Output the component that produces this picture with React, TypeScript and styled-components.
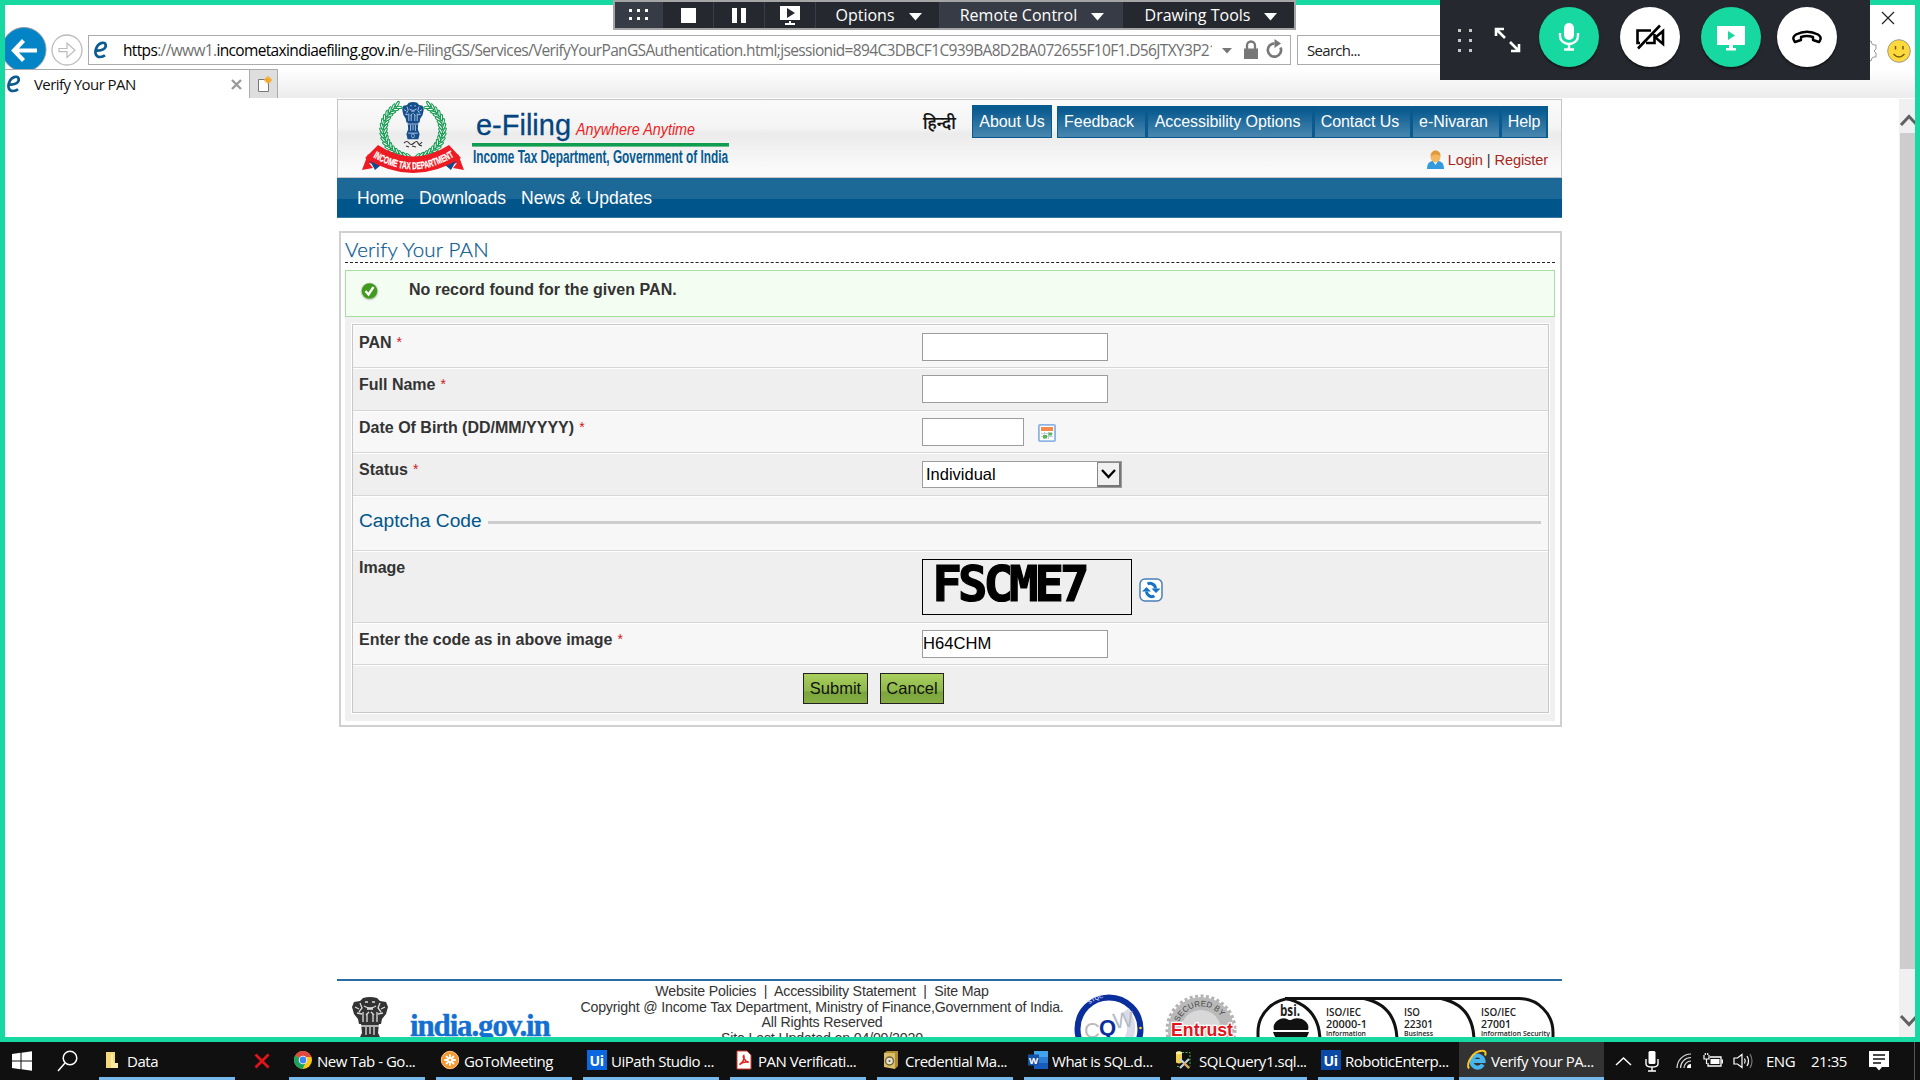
import React from "react";
import styled, { createGlobalStyle } from "styled-components";

const ui = `"Open Sans", "Noto Sans", sans-serif`;
const arial = `"Liberation Sans", Arial, sans-serif`;

const Global = createGlobalStyle`
  *, *::before, *::after { box-sizing: border-box; }
  html, body { margin: 0; padding: 0; background: #fff; }
  body { width: 1920px; height: 1080px; overflow: hidden; font-family: ${arial}; }
  svg { display: block; flex: none; overflow: visible; }
`;

const Desktop = styled.div`
  position: relative;
  width: 1920px;
  height: 1080px;
  overflow: hidden;
  display: flex;
  flex-direction: column;
`;
const SharedFrame = styled.div`
  height: 1042px;
  border: 5px solid #17d8a0;
  background: #fff;
  display: flex;
  flex-direction: column;
  overflow: hidden;
`;

/* ---------- browser chrome ---------- */
const Chrome = styled.div`
  height: 64px;
  flex: none;
  display: flex;
  padding-top: 30px;
  overflow: hidden;
`;
const NavButtons = styled.div`
  width: 83px;
  height: 43px;
  margin-top: -8px;
`;
const AddressBar = styled.div`
  width: 1203px;
  height: 30px;
  border: 1px solid #ababab;
  display: flex;
  align-items: center;
  padding: 0 6px 0 4px;
`;
const Url = styled.div`
  flex: none;
  width: 1089px;
  margin-left: 14px;
  overflow: hidden;
  white-space: nowrap;
  font: 15.5px/26px ${ui};
  letter-spacing: -0.65px;
  color: #6f6f6f;
  b { font-weight: 400; color: #000; }
`;
const AddressIcons = styled.div`
  display: flex;
  align-items: center;
  margin-left: 10px;
`;
const SearchBox = styled.div`
  width: 560px;
  height: 30px;
  margin-left: 6px;
  border: 1px solid #ababab;
  padding-left: 9px;
  font: 15px/28px ${ui};
  letter-spacing: -0.7px;
  color: #222;
`;
const BrowserTools = styled.div`
  margin-left: 4px;
  margin-top: 3px;
  display: flex;
`;
const TabStrip = styled.div`
  height: 29px;
  flex: none;
  display: flex;
  background: linear-gradient(#fff, #ececec);
`;
const Tab = styled.div`
  width: 244px;
  border-top: 1px solid #ababab;
  background: #fff;
  display: flex;
  align-items: center;
  padding-left: 1px;
`;
const TabTitle = styled.span`
  margin-left: 12px;
  width: 197px;
  font: 15px/28px ${ui};
  letter-spacing: -0.57px;
  color: #111;
`;
const NewTab = styled.div`
  width: 29px;
  border: 1px solid #ababab;
  border-bottom: 0;
  background: #dedede;
  display: flex;
  align-items: center;
  justify-content: center;
`;
const Viewport = styled.div`
  height: 939px;
  flex: none;
  margin-top: 1px;
  display: flex;
  overflow: hidden;
`;
const PageArea = styled.div`
  width: 1894px;
  padding-left: 332px;
`;
const Scrollbar = styled.div`
  width: 16px;
  background: #f0f0f0;
  display: flex;
  flex-direction: column;
  overflow: hidden;
`;
const ScrollButton = styled.div<{ $h: number; $top: number }>`
  height: ${(p) => p.$h}px;
  padding: ${(p) => p.$top}px 0 0 1px;
`;
const Thumb = styled.div`
  height: 836px;
  margin-left: 1px;
  background: #cdcdcd;
`;

/* ---------- site ---------- */
const Site = styled.div`
  width: 1225px;
`;
const Header = styled.div`
  height: 79px;
  border: 1px solid #c6c6c6;
  background: linear-gradient(#fafafa 0, #f4f4f4 36%, #ebebeb 44%, #fafafa 90%);
  display: flex;
  justify-content: space-between;
`;
const HeaderRight = styled.div`
  display: flex;
  flex-direction: column;
  align-items: flex-end;
  padding: 5px 13px 0 0;
`;
const TopMenu = styled.div`
  display: flex;
  align-items: flex-end;
`;
const Hindi = styled.div`
  width: 49px;
  height: 33px;
  font: 500 17px/40px "Noto Sans Devanagari", "Noto Sans", "Lohit Devanagari", sans-serif;
  -webkit-text-stroke: 0.2px #111;
  color: #111;
  white-space: nowrap;
`;
const MenuButton = styled.div<{ $w: number; $solo?: boolean }>`
  width: ${(p) => p.$w}px;
  height: ${(p) => (p.$solo ? 33 : 32)}px;
  margin-right: ${(p) => (p.$solo ? 5 : 0)}px;
  padding-right: ${(p) => (p.$solo ? 0 : 5)}px;
  border: 1px solid #095a8f;
  border-right-width: ${(p) => (p.$solo ? 1 : 2)}px;
  background: linear-gradient(#095a8f 10%, #4585ae 95%);
  color: #fff;
  font: 16px/${(p) => (p.$solo ? 31 : 29)}px ${arial};
  letter-spacing: -0.05px;
  text-align: center;
  white-space: nowrap;
  &:last-child { padding-right: 0; }
`;
const LoginLine = styled.div`
  display: flex;
  align-items: center;
  margin-top: 9px;
  font: 14.6px/26px ${arial};
  letter-spacing: -0.1px;
  color: #333;
  white-space: pre;
  a { color: #a8281c; }
  svg { margin-right: 3px; }
`;
const NavBar = styled.div`
  height: 40px;
  background: linear-gradient(#1c6897 0 21px, #00568a 21px 39px, #3478a4 39px);
  display: flex;
  gap: 15px;
  padding-left: 20px;
  font: 17.6px/41px ${arial};
  color: #fff;
`;
const Panel = styled.div`
  margin: 13px 0 0 2px;
  width: 1223px;
  height: 496px;
  border: 2px solid #d0d0d0;
  padding: 6px 5px 4px 4px;
`;
const PanelTitle = styled.h1`
  margin: 0;
  height: 24px;
  border-bottom: 1px dashed #222;
  font: 300 20.5px/20px Lato, sans-serif;
  letter-spacing: 0.2px;
  color: #0b5a90;
  -webkit-text-stroke: 0.25px #0b5a90;
`;
const Notice = styled.div`
  margin-top: 7px;
  height: 47px;
  border: 1px solid #a6dfa2;
  background: #f4fdf1;
  display: flex;
  padding: 10px 0 0 14px;
  font: bold 16px/18px ${arial};
  letter-spacing: 0.04px;
  color: #333;
  span { margin-left: 30px; }
`;
const FormArea = styled.div`
  background: #f0f0f0;
  height: 404px;
  padding: 7px 6px 7px 7px;
`;
const Form = styled.div`
  border: 1px solid #c8c8c8;
  outline: 1px solid #fff;
  height: 389px;
`;
const Row = styled.div<{ $h: number; $alt?: boolean }>`
  height: ${(p) => p.$h}px;
  display: flex;
  background: ${(p) => (p.$alt ? "#efefef" : "#f7f7f7")};
  border-bottom: 1px solid #d6d6d6;
  box-shadow: inset 0 1px #fff;
  &:last-child { border-bottom: 0; }
`;
const Label = styled.label<{ $t?: number }>`
  width: 569px;
  padding: ${(p) => p.$t ?? 8}px 0 0 6px;
  font: bold 16px/20px ${arial};
  color: #333;
`;
const Star = styled.span`
  margin-left: 5px;
  color: #d01818;
  font: 14px/12px ${arial};
  vertical-align: 1px;
`;
const Field = styled.div<{ $t?: number }>`
  display: flex;
  padding-top: ${(p) => p.$t ?? 8}px;
`;
const TextBox = styled.input<{ $w: number }>`
  width: ${(p) => p.$w}px;
  height: 28px;
  margin: 0;
  padding: 0;
  border: 1px solid #9c9c9c;
  border-radius: 0;
  background: #fff;
  font: 16.6px ${arial};
  color: #000;
`;
const IconSlot = styled.div<{ $l: number; $t: number }>`
  margin: ${(p) => p.$t}px 0 0 ${(p) => p.$l}px;
`;
const SelectBox = styled.div`
  width: 200px;
  height: 27px;
  border: 1px solid #9c9c9c;
  background: #fff;
  display: flex;
  justify-content: space-between;
  padding-left: 3px;
  font: 16.5px/25px ${arial};
  color: #000;
`;
const SelectArrow = styled.div`
  width: 24px;
  border: 1px solid #888;
  border-right: 2px solid #777;
  border-bottom: 2px solid #777;
  background: #f0f0f0;
  display: flex;
  align-items: center;
  justify-content: center;
`;
const Legend = styled.div`
  flex: 1;
  display: flex;
  align-items: center;
  padding: 0 7px 4px 6px;
  font: 19.2px/24px ${arial};
  color: #00568a;
  &::after { content: ""; flex: 1; height: 3px; margin: 3px 0 0 6px; background: #cdcdcd; }
`;
const Captcha = styled.div`
  width: 210px;
  height: 56px;
  border: 1px solid #000;
`;
const Actions = styled.div`
  display: flex;
  gap: 12px;
  padding: 8px 0 0 450px;
`;
const Action = styled.button<{ $w: number }>`
  width: ${(p) => p.$w}px;
  height: 31px;
  padding: 0;
  border: 1px solid #222;
  background: linear-gradient(#a9cf5d, #8fb94c 58%, #7ba53c 62%, #86ae45);
  font: 16.5px/27px ${arial};
  color: #111;
`;

/* ---------- footer ---------- */
const Footer = styled.footer`
  margin-top: 252px;
  height: 90px;
  border-top: 2px solid #2a6ca3;
  display: flex;
`;
const IndiaGov = styled.div`
  flex: none;
  width: 179px;
  padding: 28px 0 0 17px;
  font: bold 31px/34px "Liberation Serif", serif;
  letter-spacing: -1.15px;
  -webkit-text-stroke: 0.4px #1470d0;
  color: #1470d0;
`;
const FooterText = styled.div`
  flex: none;
  width: 500px;
  margin-right: 1px;
  padding-top: 3px;
  text-align: center;
  font: 14.2px/15.7px ${arial};
  letter-spacing: -0.18px;
  color: #333;
  white-space: pre;
`;

/* ---------- meeting overlays ---------- */
const MeetingBar = styled.div`
  position: absolute;
  left: 613px;
  top: 0;
  width: 683px;
  height: 30px;
  border: 2px solid #a5a5a5;
  background: #25282e;
  display: flex;
`;
const MeetingItem = styled.div<{ $w: number; $lit?: boolean }>`
  width: ${(p) => p.$w}px;
  padding-left: ${(p) => (p.$w > 60 ? 2 : 0)}px;
  display: flex;
  align-items: center;
  justify-content: center;
  gap: 12px;
  border-right: 1px solid #3a3e48;
  background: ${(p) => (p.$lit ? "#373b45" : "#25282e")};
  color: #fff;
  font: 16px/26px ${ui};
  white-space: nowrap;
  &:last-child { border-right: 0; padding-left: 5px; }
`;
const CallBar = styled.div`
  position: absolute;
  left: 1440px;
  top: 0;
  width: 430px;
  height: 80px;
  background: #25282e;
  display: flex;
  padding: 7px 0 0 18px;
`;
const CloseWindow = styled.div`
  position: absolute;
  left: 1881px;
  top: 11px;
`;
const CallButton = styled.div<{ $on?: boolean; $gap: number }>`
  width: 60px;
  height: 60px;
  margin-left: ${(p) => p.$gap}px;
  border-radius: 50%;
  background: ${(p) => (p.$on ? "#17d8a0" : "#fff")};
  box-shadow: 0 2px 2px rgba(0, 0, 0, 0.45);
  display: flex;
  align-items: center;
  justify-content: center;
`;

/* ---------- taskbar ---------- */
const Taskbar = styled.div`
  height: 38px;
  background: #101010;
  display: flex;
  font: 15px/36px ${ui};
  letter-spacing: -0.47px;
  color: #fff;
`;
const Slot = styled.div<{ $w: number; $l?: number }>`
  width: ${(p) => p.$w}px;
  padding-left: ${(p) => p.$l ?? 0}px;
  flex: none;
  display: flex;
  align-items: center;
  gap: 25px;
`;
const Task = styled.div<{ $active?: boolean; $w?: number; $r?: number; $l?: number }>`
  width: ${(p) => p.$w ?? 136}px;
  margin-right: ${(p) => p.$r ?? 11}px;
  padding-left: ${(p) => p.$l ?? 4}px;
  flex: none;
  display: flex;
  align-items: center;
  gap: 4px;
  white-space: nowrap;
  border-bottom: 3px solid #76b9ed;
  background: ${(p) => (p.$active ? "#333" : "transparent")};
  span { padding-top: 2px; }
`;
const Tray = styled.div`
  display: flex;
  align-items: center;
  padding-left: 11px;
`;
const TrayItem = styled.div<{ $w: number }>`
  width: ${(p) => p.$w}px;
  flex: none;
`;

/* ---------- drawings ---------- */
const EMark = () => (
  <svg width="16" height="20" viewBox="0 0 16 20">
    <path d="M2.500 10.500C9 11.300 13.200 8.500 12.700 5 12.200 1.600 6.600 2 4 6.600 1 12 2.400 17 7 17c2 0 3.800-.7 5-1.800" fill="none" stroke="#0b5a90" strokeWidth="2.700" />
  </svg>
);
const NavArrows = () => (
  <svg width="83" height="43" viewBox="0 0 83 43">
    <circle cx="19" cy="22.500" r="22" fill="#0284c7" stroke="#8a9aa3" strokeWidth="1" />
    <path d="M32 23.500H10M18.500 13.500 9 23.500l9.500 10" fill="none" stroke="#fff" strokeWidth="4.200" />
    <circle cx="62" cy="23" r="15" fill="#fff" stroke="#bbb" strokeWidth="1.300" />
    <path d="M54 21.500h8v-5.500l8 7.200-8 7.200v-5.700h-8z" fill="#fff" stroke="#bbb" strokeWidth="1.200" />
  </svg>
);

const leaves = (side: number) =>
  Array.from({ length: 17 }, (_, i) => {
    const a = ((-62 + i * 8.8) * Math.PI) / 180;
    const x = 50 + side * 29.5 * Math.cos(a);
    const y = 28 + 28 * Math.sin(a);
    const r = (Math.atan2(Math.cos(a), -side * Math.sin(a)) * 180) / Math.PI;
    return (
      <g key={`${side}${i}`} transform={`translate(${x} ${y}) rotate(${r})`}>
        <ellipse cx="0" cy="-2.100" rx="3.200" ry="1.100" transform="rotate(30)" />
        <ellipse cx="0" cy="2.100" rx="3.200" ry="1.100" transform="rotate(-30)" />
      </g>
    );
  });

const Lions = ({ color, light }: { color: string; light: string }) => (
  <g>
    <path d="M13 1q7-2 14 0l3 3 6 1 2 5-2 7-4 5-1 5H9l-1-5-4-5-2-7 2-5 6-1z" fill={color} />
    <path d="M11 26h18l-1 10 3 6-2 7H11l-2-7 3-6z" fill={color} />
    <path d="M15 5h3m4 0h3M14 9q6 4 12 0M17 12h6M5 10l4 2m22 0 4-2M7 16l5 1m16 0 5-1M13 15v10m4-8v8m6-8v8m4-10v10M11 29h18M16 30v8m8-8v8M20 30v7M12 41h16M10 6l2 5-3 4M30 6l-2 5 3 4M19 15l-3 3m5-3 3 3" stroke={light} strokeWidth="1.300" fill="none" />
    <circle cx="20" cy="44.500" r="2.600" fill="none" stroke={light} />
  </g>
);

const SiteLogo = () => (
  <svg width="400" height="76" viewBox="0 0 400 76">
    <g transform="translate(25 2)">
      <g fill="#fff" stroke="#149a50" strokeWidth="1.100">{leaves(1)}{leaves(-1)}</g>
      <g transform="translate(38 0) scale(.6 .76)"><Lions color="#164e8c" light="#b6cde8" /></g>
      <path d="M41 41q3-3 5 0t5 0 4 0 4-1M43 44l3 1m3-1 4 1m3-2 3 1" fill="none" stroke="#333" strokeWidth="1.200" />
      <path d="M5 52-1 68l11-2-4-5 12 3M95 52l6 16-11-2 4-5-12 3" fill="#ed1c24" />
      <path d="m7 59 5 9 6-5zM93 59l-5 9-6-5z" fill="#124a8c" />
      <path d="M15 43Q50 66 86 43L98 56Q50 86 2 56z" fill="#ed1c24" />
      <path id="ribbon" d="M10 55Q50 80 92 54" fill="none" />
      <text fill="#fff" fontFamily="Liberation Sans" fontWeight="bold" fontSize="10" stroke="#fff" strokeWidth=".3">
        <textPath href="#ribbon" textLength="86" lengthAdjust="spacingAndGlyphs">INCOME TAX DEPARTMENT</textPath>
      </text>
    </g>
    <text x="138" y="35" fontFamily="Liberation Sans" fontSize="29" fill="#05457f" stroke="#05457f" strokeWidth=".3" textLength="95" lengthAdjust="spacingAndGlyphs">e-Filing</text>
    <text x="238" y="35" fontFamily="Liberation Sans" fontStyle="italic" fontSize="16.500" fill="#ed1c24" textLength="119" lengthAdjust="spacingAndGlyphs">Anywhere Anytime</text>
    <rect x="134" y="43" width="257" height="3.600" fill="#0f9d4f" />
    <text x="135" y="63" fontFamily="Liberation Sans" fontWeight="bold" fontSize="17.500" fill="#075a90" textLength="255" lengthAdjust="spacingAndGlyphs">Income Tax Department, Government of India</text>
  </svg>
);

const Badges = () => (
  <svg width="480" height="70" viewBox="0 0 480 70">
    <circle cx="36" cy="48" r="31.500" fill="#fff" stroke="#0a2e9c" strokeWidth="6" />
    <path d="M52 30a26 26 0 0 1-26 42" fill="none" stroke="#d9dce8" strokeWidth="8" />
    <circle cx="67.500" cy="47" r="1.300" fill="#ffd400" />
    <path id="stqc" d="M11 29A31 31 0 0 1 48 19" fill="none" />
    <text fill="#cdd6ff" fontFamily="Liberation Sans" fontWeight="bold" fontSize="5.500"><textPath href="#stqc" startOffset="8">STQC</textPath></text>
    <g fontFamily="Liberation Sans" fontSize="22">
      <text x="11" y="57" fill="#bbb">C</text>
      <text x="26" y="54" fill="#0a2e9c" fontWeight="bold">Q</text>
      <text x="41" y="48" fill="#b5bac8" transform="rotate(-8 41 48)">W</text>
    </g>
    <circle cx="128" cy="49" r="33" fill="#b9b9b9" />
    <circle cx="128" cy="49" r="34" fill="none" stroke="#b3b3b3" strokeWidth="3" strokeDasharray="3 2.500" />
    <circle cx="128" cy="49" r="20" fill="#d8d8d8" />
    <path id="secured" d="M106 41A24 24 0 0 1 151 41" fill="none" />
    <text fill="#444" fontFamily="Liberation Sans" fontSize="8"><textPath href="#secured" textLength="52">SECURED BY</textPath></text>
    <text x="98" y="55" fontFamily="Liberation Sans" fontWeight="bold" fontSize="19" fill="#e3141b" stroke="#fff" strokeWidth="2.500" paintOrder="stroke" textLength="62" lengthAdjust="spacingAndGlyphs">Entrust</text>
    <g transform="translate(-2 0)">
      <g fill="#fff" stroke="#111" strokeWidth="3">
        <path d="M223 17.500h225a34 34 0 0 1 34 34v30H187V51a34 34 0 0 1 36-33.500z" />
        <path d="M370 17.500q33 7 33 43M293 17.500q33 7 33 43M215 17.500q34 8 34 43" fill="none" />
      </g>
      <path d="M214 16h226v3H214z" fill="#111" />
      <path d="M218 39q-4-3-9-1-8 4-6 11h34q2-7-6-11-7-2-11 1zM202 51h36q-3 10-18 20-15-10-18-20z" fill="#111" />
      <g fontFamily="Open Sans" fill="#222" fontWeight="600">
        <text x="209" y="35" fontSize="16" fontWeight="700" textLength="20" lengthAdjust="spacingAndGlyphs">bsi.</text>
        <g fontSize="11.500">
          <text x="255" y="35" textLength="35" lengthAdjust="spacingAndGlyphs">ISO/IEC</text>
          <text x="255" y="46.500" textLength="41" lengthAdjust="spacingAndGlyphs">20000-1</text>
          <text x="333" y="35" textLength="16" lengthAdjust="spacingAndGlyphs">ISO</text>
          <text x="333" y="46.500" textLength="29" lengthAdjust="spacingAndGlyphs">22301</text>
          <text x="410" y="35" textLength="35" lengthAdjust="spacingAndGlyphs">ISO/IEC</text>
          <text x="410" y="46.500" textLength="30" lengthAdjust="spacingAndGlyphs">27001</text>
        </g>
        <g fontSize="7.500">
          <text x="255" y="55" textLength="40" lengthAdjust="spacingAndGlyphs">Information</text>
          <text x="333" y="55" textLength="29" lengthAdjust="spacingAndGlyphs">Business</text>
          <text x="410" y="55" textLength="69" lengthAdjust="spacingAndGlyphs">Information Security</text>
        </g>
      </g>
    </g>
  </svg>
);

const CaretMark = styled.svg`
  margin: 4px 0 0 2px;
`;
const Caret = () => <CaretMark width="13" height="8" viewBox="0 0 13 8"><path d="M0 0h13L6.500 7.500z" fill="#fff" /></CaretMark>;
const Req = () => <Star>*</Star>;

const UiIcon = ({ c }: { c: string }) => (
  <svg width="20" height="20" viewBox="0 0 20 20"><rect width="20" height="20" fill={c} /><text x="2.500" y="15.500" fill="#fff" fontFamily="Open Sans" fontWeight="700" fontSize="14.500" textLength="14" lengthAdjust="spacingAndGlyphs">Ui</text></svg>
);
const ChromeIcon = () => (
  <svg width="20" height="20" viewBox="0 0 20 20"><circle cx="10" cy="10" r="9" fill="#f9c915" /><path d="M10 10 2.200 5.500A9 9 0 0 1 17.800 5.500L18 7H10z" fill="#dd4b3e" /><path d="M2.200 5.500A9 9 0 0 0 9.500 19l3.500-7-3-2z" fill="#1aa260" /><circle cx="10" cy="10" r="4.300" fill="#fff" /><circle cx="10" cy="10" r="3.400" fill="#4285f4" /></svg>
);
const GoToIcon = () => (
  <svg width="20" height="20" viewBox="0 0 20 20"><circle cx="10" cy="10" r="8.700" fill="#f59a31" stroke="#ffc680" /><path d="M10 5v3M10 12v3M5 10h3M12 10h3M6.500 6.500l2 2M11.500 11.500l2 2M13.500 6.500l-2 2M8.500 11.500l-2 2" stroke="#fff" strokeWidth="1.800" strokeLinecap="round" /></svg>
);
const PdfIcon = () => (
  <svg width="20" height="20" viewBox="0 0 20 20"><path d="M3 1h10l4 4v14H3z" fill="#fff" stroke="#d9392f" /><path d="M5.500 14.500C9 13 11 8 9.800 5.500c-1.300 1 .5 6 5 6.700-3.500-.6-7 .5-9.300 2.300z" fill="none" stroke="#e0241b" strokeWidth="1.500" /></svg>
);
const SafeIcon = () => (
  <svg width="20" height="20" viewBox="0 0 20 20"><path d="M3 3 6 1l11 0v15l-3 3z" fill="#b08b32" /><path d="M3 3h11v16L3 17z" fill="#dcbf6a" /><circle cx="8.500" cy="11" r="4" fill="#e8e2cc" stroke="#6e6238" strokeWidth="1.400" /><circle cx="8.500" cy="11" r="1" fill="#554" /></svg>
);
const WordIcon = () => (
  <svg width="20" height="20" viewBox="0 0 20 20"><path d="M6 1h14v6H6z" fill="#41a5ee" /><path d="M6 7h14v6H6z" fill="#2b7cd3" /><path d="M6 13h14v6H6z" fill="#185abd" /><rect y="4.500" width="11" height="11" fill="#1552a8" /><text x="1" y="13.500" fontFamily="Open Sans" fontWeight="700" fontSize="9.500" fill="#fff">W</text></svg>
);
const SqlIcon = () => (
  <svg width="20" height="20" viewBox="0 0 20 20"><path d="M7 2.500h8v14M2 16.500h5" fill="none" stroke="#3cc13b" strokeDasharray="2 1.500" /><path d="M1 2.500q3-2 6 0v10q-3 2-6 0z" fill="#f1d04b" /><ellipse cx="4" cy="2.800" rx="3" ry="1.500" fill="#fff2a8" /><path d="m5 9 9 9M14 9l-9 9" stroke="#c3d0dc" strokeWidth="2.200" /><path d="m9 13 5 5" stroke="#e2a64a" strokeWidth="2" /></svg>
);
const IeIcon = () => (
  <svg width="20" height="22" viewBox="0 0 20 22"><path d="M5 12h11.500a6 6 0 1 0-.7 3.500" fill="none" stroke="#47b6ee" strokeWidth="4" /><path d="M2 19.500C-2 15 7 0 17 2c2.500 1 1.500 3.500 1 4.500" fill="none" stroke="#f7c52d" strokeWidth="2" /></svg>
);

const tasks: [string, React.ReactNode][] = [
  ["New Tab - Go...", <ChromeIcon />],
  ["GoToMeeting", <GoToIcon />],
  ["UiPath Studio ...", <UiIcon c="#0a67e0" />],
  ["PAN Verificati...", <PdfIcon />],
  ["Credential Ma...", <SafeIcon />],
  ["What is SQL.d...", <WordIcon />],
  ["SQLQuery1.sql...", <SqlIcon />],
];

export default function App() {
  return (
    <Desktop>
      <Global />
      <SharedFrame>
        <Chrome>
          <NavButtons><NavArrows /></NavButtons>
          <AddressBar>
            <EMark />
            <Url>
              <b>https</b>://www1.<b>incometaxindiaefiling.gov.in</b>/e-FilingGS/Services/VerifyYourPanGSAuthentication.html;jsessionid=894C3DBCF1C939BA8D2BA072655F10F1.D56JTXY3P21
            </Url>
            <AddressIcons>
              <svg width="62" height="22" viewBox="0 0 62 22">
                <path d="M0 9h10l-5 5.500z" fill="#777" />
                <path d="M22 9.500h14V20H22z" fill="#777" /><path d="M25 10V6.500a4 4 0 0 1 8 0V10" fill="none" stroke="#777" strokeWidth="2.300" />
                <path d="M58.500 8.500a6.600 6.600 0 1 1-6-4" fill="none" stroke="#777" strokeWidth="2.700" /><path d="M52.500 0l6.500 4.500-6.500 4.500z" fill="#777" />
              </svg>
            </AddressIcons>
          </AddressBar>
          <SearchBox>Search...</SearchBox>
          <BrowserTools>
            <svg width="52" height="26" viewBox="0 0 52 26">
              <path d="M8 4l2-1 1 3 2 1 2 0v4l-2 2 2 2v4l-2 0-2 1-1 3-2-1" fill="none" stroke="#999" />
              <circle cx="38" cy="13" r="11.300" fill="#ffd93b" stroke="#9b9b8e" />
              <path d="M34.500 8v3.500M42 8v3.500" stroke="#6d5b12" strokeWidth="1.500" /><path d="M32.500 16q5.500 6 11 0" fill="none" stroke="#6d5b12" strokeWidth="1.300" />
            </svg>
          </BrowserTools>
        </Chrome>
        <TabStrip>
          <Tab>
            <EMark />
            <TabTitle>Verify Your PAN</TabTitle>
            <svg width="11" height="11" viewBox="0 0 11 11"><path d="m1 1 9 9M10 1l-9 9" stroke="#9a9a9a" strokeWidth="2.300" /></svg>
          </Tab>
          <NewTab>
            <svg width="16" height="17" viewBox="0 0 16 17"><path d="M2.500 3.500h10v12h-10z" fill="#fff" stroke="#777" /><path d="M12 0v8M8 4h8M9.500 1.500l5 5M14.500 1.500l-5 5" stroke="#f7a823" strokeWidth="1.300" /></svg>
          </NewTab>
        </TabStrip>
        <Viewport>
          <PageArea>
            <Site>
              <Header>
                <SiteLogo />
                <HeaderRight>
                  <TopMenu>
                    <Hindi>हिन्दी</Hindi>
                    <MenuButton $w={80} $solo>About Us</MenuButton>
                    <MenuButton $w={90}>Feedback</MenuButton>
                    <MenuButton $w={167}>Accessibility Options</MenuButton>
                    <MenuButton $w={98}>Contact Us</MenuButton>
                    <MenuButton $w={89}>e-Nivaran</MenuButton>
                    <MenuButton $w={47}>Help</MenuButton>
                  </TopMenu>
                  <LoginLine>
                    <svg width="19" height="20" viewBox="0 0 19 20"><path d="M1 19q0-7 5-8h7q5 1 5 8z" fill="#329be0" /><path d="m7 11 2.500 4 2.500-4z" fill="#fff" /><ellipse cx="9.500" cy="6.500" rx="5" ry="6" fill="#f3b861" /><path d="M4.500 6q1-6 6-5.500 4 1 4 5.500-4-3-10 0z" fill="#e09a3e" /></svg>
                    <a>Login</a> | <a>Register</a>
                  </LoginLine>
                </HeaderRight>
              </Header>
              <NavBar><span>Home</span><span>Downloads</span><span>News &amp; Updates</span></NavBar>
              <Panel>
                <PanelTitle>Verify Your PAN</PanelTitle>
                <Notice>
                  <svg width="19" height="20" viewBox="0 0 19 20"><circle cx="9.500" cy="10.500" r="9" fill="#d0d6cc" /><circle cx="9.500" cy="10" r="7.800" fill="#3f9a1e" /><path d="m5.500 10 3 3.500 5-7.500" fill="none" stroke="#fff" strokeWidth="2.300" /></svg>
                  <span>No record found for the given PAN.</span>
                </Notice>
                <FormArea>
                  <Form>
                    <Row $h={43}><Label>PAN<Req /></Label><Field><TextBox $w={186} /></Field></Row>
                    <Row $h={43} $alt><Label $t={7}>Full Name<Req /></Label><Field $t={7}><TextBox $w={186} /></Field></Row>
                    <Row $h={42}>
                      <Label $t={7}>Date Of Birth (DD/MM/YYYY)<Req /></Label>
                      <Field $t={7}>
                        <TextBox $w={102} />
                        <IconSlot $l={14} $t={6}>
                          <svg width="18" height="18" viewBox="0 0 18 18"><rect x=".9" y=".9" width="16.200" height="16.200" rx="1" fill="#fff" stroke="#8db4e4" strokeWidth="1.800" /><path d="M3 3h12v4H3z" fill="#f58a4b" /><path d="M3 9.500h12M3 12.500h12M6.500 8v7M10.500 8v7" stroke="#b9cfe8" /><path d="M5 11h4v3.500H5zM10.500 8.500h3.500v3h-3.500z" fill="#5cb552" /></svg>
                        </IconSlot>
                      </Field>
                    </Row>
                    <Row $h={43} $alt>
                      <Label $t={7}>Status<Req /></Label>
                      <Field>
                        <SelectBox>Individual<SelectArrow><svg width="15" height="10" viewBox="0 0 15 10"><path d="m1 1 6.500 7L14 1" fill="none" stroke="#000" strokeWidth="2.300" /></svg></SelectArrow></SelectBox>
                      </Field>
                    </Row>
                    <Row $h={55}><Legend>Captcha Code</Legend></Row>
                    <Row $h={72} $alt>
                      <Label $t={7}>Image</Label>
                      <Field>
                        <Captcha>
                          <svg width="208" height="54" viewBox="0 0 208 54"><text x="9.500" y="40.500" fontFamily="DejaVu Sans Mono" fontWeight="bold" fontSize="49" letterSpacing="-4" stroke="#000" strokeWidth="1.200">FSCME7</text></svg>
                        </Captcha>
                        <IconSlot $l={7} $t={19}>
                          <svg width="24" height="24" viewBox="0 0 24 24"><rect x="1" y="1" width="22" height="22" rx="5" fill="#fff" stroke="#4a7fb6" strokeWidth="1.500" /><path d="M16.500 10.500a5.500 5.500 0 0 0-8-4.500M7.500 13.500a5.500 5.500 0 0 0 8 4.500" fill="none" stroke="#1773c4" strokeWidth="3" /><path d="M12.500 10.500h9L17 15zM3 13.500h9L7.500 9z" fill="#1773c4" /></svg>
                        </IconSlot>
                      </Field>
                    </Row>
                    <Row $h={42}><Label $t={7}>Enter the code as in above image<Req /></Label><Field $t={7}><TextBox $w={186} defaultValue="H64CHM" /></Field></Row>
                    <Row $h={47} $alt><Actions><Action $w={65}>Submit</Action><Action $w={64}>Cancel</Action></Actions></Row>
                  </Form>
                </FormArea>
              </Panel>
              <Footer>
                <svg width="56" height="70" viewBox="0 0 56 70"><g transform="translate(13 16)"><Lions color="#333" light="#ddd" /></g></svg>
                <IndiaGov>india.gov.in</IndiaGov>
                <FooterText>{"Website Policies  |  Accessibility Statement  |  Site Map\nCopyright @ Income Tax Department, Ministry of Finance,Government of India.\nAll Rights Reserved\nSite Last Updated on 04/09/2020"}</FooterText>
                <Badges />
              </Footer>
            </Site>
          </PageArea>
          <Scrollbar>
            <ScrollButton $h={34} $top={14}><svg width="16" height="14" viewBox="0 0 16 14"><path d="m1 12 8-8.500 8 8.500" fill="none" stroke="#606060" strokeWidth="3" /></svg></ScrollButton>
            <Thumb />
            <ScrollButton $h={68} $top={45}><svg width="16" height="14" viewBox="0 0 16 14"><path d="m1 2 8 8.500 8-8.500" fill="none" stroke="#606060" strokeWidth="3" /></svg></ScrollButton>
          </Scrollbar>
        </Viewport>
      </SharedFrame>

      <Taskbar>
        <Slot $w={99} $l={12}>
          <svg width="20" height="20" viewBox="0 0 20 20"><path d="M0 3l8.500-1.200v7.700H0zM9.500 1.700 20 .2v9.300H9.500zM0 10.500h8.500v7.700L0 17zM9.500 10.500H20v9.300L9.500 18.300z" fill="#fff" /></svg>
          <svg width="22" height="22" viewBox="0 0 22 22"><circle cx="13" cy="8" r="6.800" fill="none" stroke="#fff" strokeWidth="1.500" /><path d="M8 13 1 21" stroke="#fff" strokeWidth="1.500" /></svg>
        </Slot>
        <Task $r={19}>
          <svg width="20" height="20" viewBox="0 0 20 20"><path d="M3 2h9v16H3z" fill="#f5d77c" /><path d="M8 4h2v9h5v5H8z" fill="#ffe9a6" /></svg>
          <span>Data</span>
        </Task>
        <Slot $w={35}><svg width="16" height="16" viewBox="0 0 16 16"><path d="m1.500 1.500 13 13m0-13-13 13" stroke="#e3131b" strokeWidth="2.700" /></svg></Slot>
        {tasks.map(([name, icon]) => (
          <Task key={name}>{icon}<span>{name}</span></Task>
        ))}
        <Task $r={5} $l={3}><UiIcon c="#0a4aa6" /><span>RoboticEnterp...</span></Task>
        <Task $active $w={145} $r={0} $l={8}><IeIcon /><span>Verify Your PA...</span></Task>
        <Tray>
          <TrayItem $w={30}><svg width="17" height="9" viewBox="0 0 17 9"><path d="m1 8 7.500-7L16 8" fill="none" stroke="#fff" strokeWidth="1.500" /></svg></TrayItem>
          <TrayItem $w={31}><svg width="14" height="21" viewBox="0 0 14 21"><rect x="3.500" y="0" width="7" height="13" rx="1.500" fill="#fff" /><path d="M1 8v5q0 3 6 3t6-3V8M7 16v4M3 20h8" fill="none" stroke="#fff" strokeWidth="1.400" /></svg></TrayItem>
          <TrayItem $w={27}><svg width="16" height="16" viewBox="0 0 16 16"><g fill="none" stroke="#ddd" strokeWidth="1.200"><path d="M1 15A14 14 0 0 1 15 1M4.500 15A10.500 10.500 0 0 1 15 4.500M8 15a7 7 0 0 1 7-7" /></g><path d="M11 15a4 4 0 0 1 4-4v4z" fill="#fff" /></svg></TrayItem>
          <TrayItem $w={30}><svg width="20" height="16" viewBox="0 0 20 16"><path d="M7 4h11v9H5v-3" fill="none" stroke="#fff" strokeWidth="1.300" /><path d="M7.500 6h9v5h-9zM18.500 6.500H20v4h-1.500z" fill="#fff" /><path d="M1 2v4h5V2M2.300 0v2M4.700 0v2M3.500 6v5" stroke="#fff" fill="none" strokeWidth="1.200" /></svg></TrayItem>
          <TrayItem $w={33}><svg width="21" height="18" viewBox="0 0 21 18"><path d="M1 6h3.500L9 2.500v13L4.500 12H1z" fill="none" stroke="#fff" strokeWidth="1.200" /><path d="M11.500 6.500q1.500 2.500 0 5M14 4q3 5 0 10" fill="none" stroke="#fff" strokeWidth="1.200" /><path d="M17 2q4 7 0 14" fill="none" stroke="#777" strokeWidth="1.200" /></svg></TrayItem>
          <TrayItem $w={45}>ENG</TrayItem>
          <TrayItem $w={58}>21:35</TrayItem>
          <TrayItem $w={45}><svg width="21" height="20" viewBox="0 0 21 20"><path d="M0 0h20v16h-7l-3 3.500L7 16H0z" fill="#fff" /><path d="M4 4h12M4 8h12M4 12h8" stroke="#101010" strokeWidth="1.400" /></svg></TrayItem>
          <svg width="1" height="38"><path d="M.5 0v38" stroke="#555" /></svg>
        </Tray>
      </Taskbar>

      <MeetingBar>
        <MeetingItem $w={48} $lit>
          <svg width="20" height="12" viewBox="0 0 20 12"><path d="M0 0h3v3H0zM8 0h3v3H8zM16 0h3v3h-3zM0 8h3v3H0zM8 8h3v3H8zM16 8h3v3h-3z" fill="#fff" /></svg>
        </MeetingItem>
        <MeetingItem $w={51}><svg width="15" height="15"><rect width="15" height="15" fill="#fff" /></svg></MeetingItem>
        <MeetingItem $w={51}><svg width="15" height="15"><path d="M0 0h5v15H0zM9 0h5v15H9z" fill="#fff" /></svg></MeetingItem>
        <MeetingItem $w={51}><svg width="20" height="19" viewBox="0 0 20 19"><path d="M0 0h20v14H0zM5 17h10v2H5zM9 15h2v2H9z" fill="#fff" /><path d="m7 2 8 5-8 5z" fill="#25282e" /></svg></MeetingItem>
        <MeetingItem $w={124}>Options<Caret /></MeetingItem>
        <MeetingItem $w={183} $lit>Remote Control<Caret /></MeetingItem>
        <MeetingItem $w={171}>Drawing Tools<Caret /></MeetingItem>
      </MeetingBar>

      <CallBar>
        <svg width="64" height="60" viewBox="0 0 64 60">
          <path d="M0 22h3v3H0zM11 22h3v3h-3zM0 32h3v3H0zM11 32h3v3h-3zM0 42h3v3H0zM11 42h3v3h-3z" fill="#c8c8c8" />
          <path d="m39 23 8 8M52 35l8 8M38 29v-7h8M61 37v7h-8" fill="none" stroke="#fff" strokeWidth="2.600" />
        </svg>
        <CallButton $on $gap={16.5}>
          <svg width="22" height="30" viewBox="0 0 22 30"><rect x="6" y="1" width="10" height="17" rx="5" fill="#fff" /><path d="M2 11v3a9 8 0 0 0 18 0v-3M11 22v5M6 27.500h10" fill="none" stroke="#fff" strokeWidth="2.400" /></svg>
        </CallButton>
        <CallButton $gap={21}>
          <svg width="30" height="26" viewBox="0 0 30 26"><g fill="none" stroke="#000" strokeWidth="2.600"><path d="M16 6.500H2.500V19H5M11 19h8.500v-9M3 24.500 25 1.500" /><path d="m21 13 7-6v13l-7-6z" /></g></svg>
        </CallButton>
        <CallButton $on $gap={21}>
          <svg width="30" height="28" viewBox="0 0 30 28"><path d="M1 3h28v19H1zM10 25h10v2.500H10zM13 22h4v4h-4z" fill="#fff" /><path d="m12 8 7 4.500-7 4.500z" fill="#17d8a0" /></svg>
        </CallButton>
        <CallButton $on={false} $gap={16.5}>
          <svg width="30" height="14" viewBox="0 0 30 14"><path d="M2 10.500Q0 7 4 4.500q11-5.500 22 0 4 2.500 2 6l-1 1.500-6-2V7q-6-2-12 0v3l-6 2z" fill="none" stroke="#000" strokeWidth="2.400" strokeLinejoin="round" /></svg>
        </CallButton>
      </CallBar>
      <CloseWindow><svg width="14" height="14" viewBox="0 0 14 14"><path d="m1 1 12 12M13 1 1 13" stroke="#222" strokeWidth="1.200" /></svg></CloseWindow>
    </Desktop>
  );
}
